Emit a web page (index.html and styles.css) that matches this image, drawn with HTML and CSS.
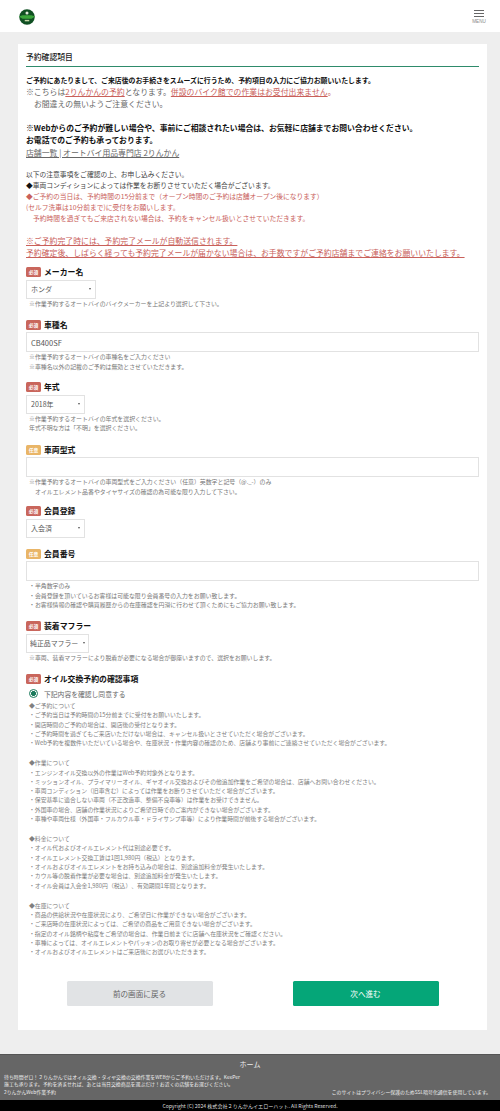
FILE: index.html
```html
<!DOCTYPE html>
<html lang="ja">
<head>
<meta charset="utf-8">
<title>予約確認項目</title>
<link rel="stylesheet" href="styles.css">
</head>
<body>
<header class="site-header">
  <svg class="logo" viewBox="0 0 20 20" aria-label="2りんかん">
    <circle cx="10" cy="10" r="8.6" fill="#0f4f22"/>
    <path d="M1 9.5 L5 8 L15 8 L19 9.5 L15 12 L5 12 Z" fill="#3aa53a"/>
    <circle cx="10" cy="5.5" r="1.7" fill="#dfe8d8"/>
    <rect x="7.5" y="13.2" width="5" height="1.6" fill="#c6d8a8"/>
  </svg>
  <div class="menu">
    <span class="menu-bar"></span><span class="menu-bar"></span><span class="menu-bar"></span>
    <span class="menu-text">MENU</span>
  </div>
</header>
<main class="card">
  <h1 class="title">予約確認項目</h1>
  <p class="lead-bold">ご予約にあたりまして、ご来店後のお手続きをスムーズに行うため、予約項目の入力にご協力お願いいたします。</p>
  <p class="lead">※こちらは<a class="red-link">2りんかんの予約</a>となります。<a class="red-link">併設のバイク館での作業はお受付出来ません</a><span class="red">。</span></p>
  <p class="lead indent">お間違えの無いようご注意ください。</p>
  <p class="strong first">※Webからのご予約が難しい場合や、事前にご相談されたい場合は、お気軽に店舗までお問い合わせください。</p>
  <p class="strong">お電話でのご予約も承っております。</p>
  <p class="lead"><a class="shop-link">店舗一覧 | オートバイ用品専門店 2りんかん</a></p>
  <div class="notice">
    <p>以下の注意事項をご確認の上、お申し込みください。</p>
    <p><span class="black">◆</span>車両コンディションによっては作業をお断りさせていただく場合がございます。</p>
    <p class="red">◆ご予約の当日は、予約時間の15分前まで（オープン時間のご予約は店舗オープン後になります）</p>
    <p class="red">(セルフ洗車は10分前まで)に受付をお願いします。</p>
    <p class="red indent">予約時間を過ぎてもご来店されない場合は、予約をキャンセル扱いとさせていただきます。</p>
  </div>
  <p class="lead under first">※ご予約完了時には、予約完了メールが自動送信されます。</p>
  <p class="lead under">予約確定後、しばらく経っても予約完了メールが届かない場合は、お手数ですがご予約店舗までご連絡をお願いいたします。</p>

  <section class="field f-maker">
    <h2 class="label"><span class="badge">必須</span>メーカー名</h2>
    <div class="select s-maker"><select><option>ホンダ</option></select></div>
    <p class="hint">※作業予約するオートバイのバイクメーカーを上記より選択して下さい。</p>
  </section>
  <section class="field f-model">
    <h2 class="label"><span class="badge">必須</span>車種名</h2>
    <input class="text" type="text" value="CB400SF">
    <p class="hint">※作業予約するオートバイの車種名をご入力ください</p>
    <p class="hint">※車種名以外の記載のご予約は無効とさせていただきます。</p>
  </section>
  <section class="field f-year">
    <h2 class="label"><span class="badge">必須</span>年式</h2>
    <div class="select s-year"><select><option>2018年</option></select></div>
    <p class="hint">※作業予約するオートバイの年式を選択ください。</p>
    <p class="hint">年式不明な方は「不明」を選択ください。</p>
  </section>
  <section class="field f-type">
    <h2 class="label"><span class="badge opt">任意</span>車両型式</h2>
    <input class="text" type="text">
    <p class="hint">※作業予約するオートバイの車両型式をご入力ください（任意）英数字と記号（@._-）のみ</p>
    <p class="hint hint-indent">オイルエレメント品番やタイヤサイズの確認の為可能な限り入力して下さい。</p>
  </section>
  <section class="field f-member">
    <h2 class="label"><span class="badge">必須</span>会員登録</h2>
    <div class="select s-year"><select><option>入会済</option></select></div>
  </section>
  <section class="field f-number">
    <h2 class="label"><span class="badge opt">任意</span>会員番号</h2>
    <input class="text" type="text">
    <p class="hint">・半角数字のみ</p>
    <p class="hint">・会員登録を頂いているお客様は可能な限り会員番号の入力をお願い致します。</p>
    <p class="hint">・お客様情報の確認や購買履歴からの在庫確認を円滑に行わせて頂くためにもご協力お願い致します。</p>
  </section>
  <section class="field f-muffler">
    <h2 class="label"><span class="badge">必須</span>装着マフラー</h2>
    <div class="select s-muffler"><select><option>純正品マフラー</option></select></div>
    <p class="hint">※車両、装着マフラーにより脱着が必要になる場合が御座いますので、選択をお願いします。</p>
  </section>
  <section class="field f-oil">
    <h2 class="label"><span class="badge">必須</span>オイル交換予約の確認事項</h2>
    <div class="agree"><span class="radio"></span>下記内容を確認し同意する</div>
    <div class="terms">
      <p>◆ご予約について</p>
      <p>・ご予約当日は予約時間の15分前までに受付をお願いいたします。</p>
      <p>・開店時間のご予約の場合は、開店後の受付となります。</p>
      <p>・ご予約時間を過ぎてもご来店いただけない場合は、キャンセル扱いとさせていただく場合がございます。</p>
      <p>・Web予約を複数件いただいている場合や、在庫状況・作業内容の確認のため、店舗より事前にご連絡させていただく場合がございます。</p>
      <p class="gap">◆作業について</p>
      <p>・エンジンオイル交換以外の作業はWeb予約対象外となります。</p>
      <p>・ミッションオイル、プライマリーオイル、ギヤオイル交換およびその他追加作業をご希望の場合は、店舗へお問い合わせください。</p>
      <p>・車両コンディション（旧車含む）によっては作業をお断りさせていただく場合がございます。</p>
      <p>・保安基準に適合しない車両（不正改造車、整備不良車等）は作業をお受けできません。</p>
      <p>・外国車の場合、店舗の作業状況によりご希望日時でのご案内ができない場合がございます。</p>
      <p>・車種や車両仕様（外国車・フルカウル車・ドライサンプ車等）により作業時間が前後する場合がございます。</p>
      <p class="gap">◆料金について</p>
      <p>・オイル代およびオイルエレメント代は別途必要です。</p>
      <p>・オイルエレメント交換工賃は1回1,980円（税込）となります。</p>
      <p>・オイルおよびオイルエレメントをお持ち込みの場合は、別途追加料金が発生いたします。</p>
      <p>・カウル等の脱着作業が必要な場合は、別途追加料金が発生いたします。</p>
      <p>・オイル会員は入会金1,980円（税込）、有効期間1年間となります。</p>
      <p class="gap">◆在庫について</p>
      <p>・商品の供給状況や在庫状況により、ご希望日に作業ができない場合がございます。</p>
      <p>・ご来店時の在庫状況によっては、ご希望の商品をご用意できない場合がございます。</p>
      <p>・指定のオイル銘柄や粘度をご希望の場合は、作業日前までに店舗へ在庫状況をご確認ください。</p>
      <p>・車種によっては、オイルエレメントやパッキンのお取り寄せが必要となる場合がございます。</p>
      <p>・オイルおよびオイルエレメントはご来店後にお選びいただきます。</p>
    </div>
  </section>
  <div class="actions">
    <button class="btn back" type="button">前の画面に戻る</button>
    <button class="btn next" type="button">次へ進む</button>
  </div>
</main>
<footer class="footer">
  <div class="footer-main">
    <div class="home">ホーム</div>
    <div class="footer-row">
      <p class="footer-desc">待ち時間ゼロ！２りんかんではオイル交換・タイヤ交換の交換作業をWEBからご予約いただけます。KeePer<br>施工も承ります。予約を済ませれば、あとは当日交換商品を選ぶだけ！お近くの店舗をお選びください。<br>2りんかんWeb作業予約</p>
      <p class="footer-ssl">このサイトはプライバシー保護のためSSL暗号化通信を使用しています。</p>
    </div>
  </div>
  <div class="copyright">Copyright (C) 2024 株式会社２りんかんイエローハット. All Rights Reserved.</div>
</footer>
</body>
</html>
```

FILE: styles.css
```css
* { box-sizing: border-box; }
html, body { margin: 0; padding: 0; }
body {
  width: 500px;
  height: 1111px;
  overflow: hidden;
  background: #eeeeee;
  color: #444;
  font-family: "Noto Sans CJK JP", "Noto Sans", sans-serif;
  display: flex;
  flex-direction: column;
}
p, h1, h2 { margin: 0; font-weight: normal; }

.site-header {
  height: 32px;
  background: #fff;
  display: flex;
  align-items: center;
  justify-content: space-between;
  padding: 0 14px 0 18px;
  flex: none;
}
.logo { width: 18px; height: 18px; display: block; margin-top: 1px; }
.menu { width: 14px; display: flex; flex-direction: column; align-items: center; margin-top: 2px; }
.menu-bar { width: 10px; height: 1.3px; background: #666; margin-bottom: 2px; }
.menu-text { font-size: 4.6px; line-height: 5px; color: #888; font-family: "Liberation Sans", sans-serif; }

.card {
  flex: none;
  margin: 12px 13px 24px 18px;
  height: 986px;
  background: #fff;
  padding: 7px 8px 0;
}
.title {
  font-size: 7.8px;
  line-height: 12px;
  font-weight: 500;
  color: #222;
  padding-bottom: 3px;
  border-bottom: 1px solid #2e8b6b;
  margin-bottom: 7.5px;
}
.lead-bold { font-size: 6.88px; line-height: 11px; font-weight: 700; color: #111; }
.lead { font-size: 7.87px; line-height: 12.6px; color: #666; }
.indent { padding-left: 7.9px; }
.strong { font-size: 7.82px; line-height: 12.3px; font-weight: 700; color: #111; }
.first { margin-top: 11.5px; }
.red-link { color: #c9605a; text-decoration: underline; }
.red { color: #c9605a; }
.shop-link { color: #666; text-decoration: underline; }
.black { color: #111; }
.notice { margin-top: 10px; font-size: 6.78px; line-height: 10.8px; color: #444; }
.notice .indent { padding-left: 7px; }
.under { color: #c9605a; text-decoration: underline; }

.field { display: block; }
.f-maker { margin-top: 6px; }
.f-model { margin-top: 11px; }
.f-year { margin-top: 10.4px; }
.f-type { margin-top: 11.4px; }
.f-member { margin-top: 9.4px; }
.f-number { margin-top: 10px; }
.f-muffler { margin-top: 11px; }
.f-oil { margin-top: 11px; }

.label {
  display: flex;
  align-items: center;
  font-size: 7.87px;
  line-height: 12px;
  font-weight: 700;
  color: #111;
  margin-bottom: 1.5px;
}
.badge {
  width: 15px;
  height: 10px;
  background: #c9665c;
  color: #fff;
  font-size: 4.8px;
  line-height: 10px;
  text-align: center;
  border-radius: 1.5px;
  margin-right: 3px;
  font-weight: 700;
}
.badge.opt { background: #e9b567; }

.select { position: relative; height: 19px; }
.select select {
  display: block;
  appearance: none;
  -webkit-appearance: none;
  width: 100%;
  height: 100%;
  background: #fff;
  border: 1px solid #e2e2e2;
  border-radius: 0;
  color: #555;
  font-family: inherit;
  font-size: 7px;
  padding: 0 0 0 4px;
}
.select::after {
  content: "";
  position: absolute;
  right: 5px;
  top: 8px;
  border-left: 1.7px solid transparent;
  border-right: 1.7px solid transparent;
  border-top: 2.5px solid #555;
}
.s-maker { width: 70px; }
.s-year { width: 59px; }
.s-muffler { width: 63px; }
.s-muffler select { padding-left: 3px; font-size: 6.9px; }
.s-muffler::after { right: 4px; }
.text {
  display: block;
  width: 100%;
  height: 20px;
  border: 1px solid #e2e2e2;
  background: #fff;
  padding: 0 4px;
  color: #555;
  font-family: inherit;
  font-size: 7.5px;
  border-radius: 0;
  outline: none;
}
.hint { font-size: 5.9px; line-height: 9.3px; color: #777; padding-left: 3px; }
.hint-indent { padding-left: 9px; }

.agree { display: flex; align-items: center; font-size: 6.8px; line-height: 12px; color: #666; padding-left: 3px; margin-top: 3px; }
.radio {
  width: 9px;
  height: 9px;
  border: 1px solid #1c7a5c;
  border-radius: 50%;
  margin-right: 6px;
  background: radial-gradient(circle, #1c7a5c 0 2.2px, #fff 2.6px);
}
.terms { font-size: 5.85px; line-height: 9.3px; color: #808080; padding-left: 3px; margin-top: 1px; }
.gap { margin-top: 10.8px; }

.actions { display: flex; justify-content: center; gap: 80px; margin-top: 24px; }
.btn {
  width: 146px;
  height: 25px;
  border: none;
  border-radius: 1.5px;
  font-family: inherit;
  font-size: 7.6px;
}
.back { background: #e1e3e5; color: #666; }
.next { background: #05a678; color: #fff; }

.footer { flex: none; color: #eee; }
.footer-main { background: #666; height: 45.5px; border-top: 1px solid #555; padding: 4px 4px 0; }
.home { text-align: center; font-size: 7px; line-height: 11px; }
.footer-row { display: flex; justify-content: space-between; align-items: flex-end; margin-top: 3px; }
.footer-desc { font-size: 4.9px; line-height: 7.3px; white-space: nowrap; }
.footer-ssl { font-size: 4.9px; line-height: 7.3px; padding-right: 5px; white-space: nowrap; }
.copyright { background: #000; height: 11.5px; font-size: 5.1px; line-height: 11.5px; text-align: center; color: #ddd; }
```
